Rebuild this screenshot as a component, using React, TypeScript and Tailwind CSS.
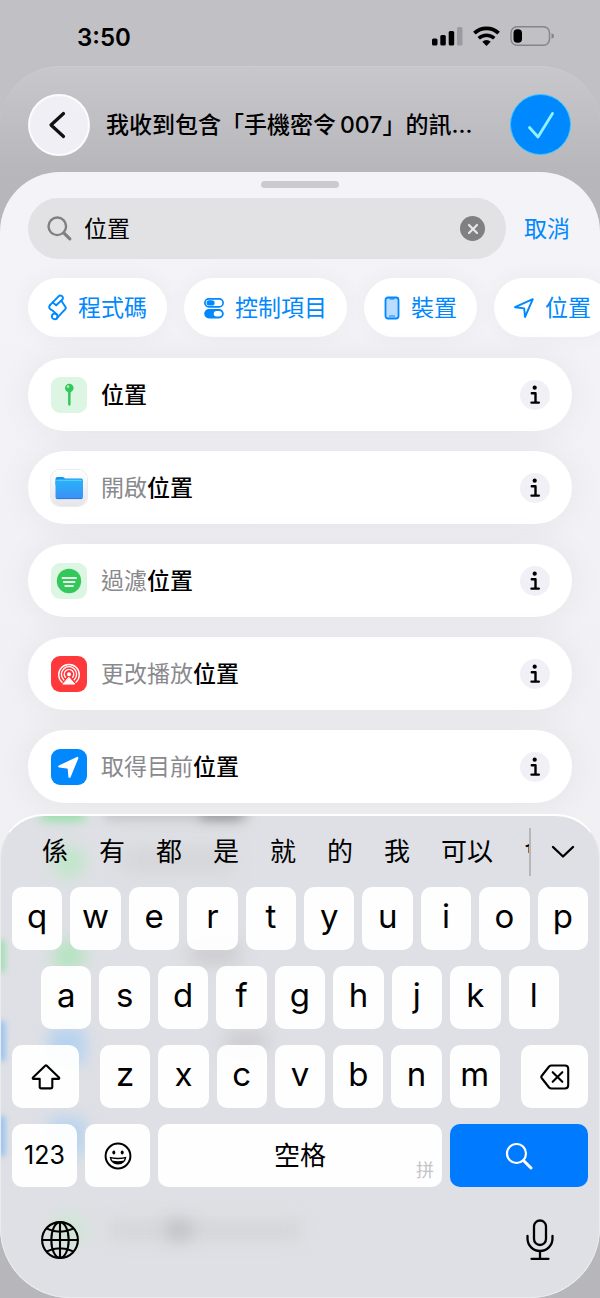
import React, { useState } from 'react';
import { X } from 'lucide-react';

interface Action {
  prefix: string;
  match: string;
  icon: React.ReactNode;
}

const PinIcon = () => (
  <span className="flex size-9 items-center justify-center rounded-[9px] bg-[#dcf6e3]">
    <svg width="36" height="36" viewBox="0 0 36 36" fill="none">
      <path d="M17.4 13h1.800l-.1 14.800q-.8 1.600-1.600 0z" fill="#34c759" stroke="#34c759" strokeWidth=".8" />
      <circle cx="18.300" cy="11" r="4.300" fill="#34c759" />
      <circle cx="17" cy="9.600" r="1.300" fill="#b5ecc3" />
    </svg>
  </span>
);

const FolderIcon = () => (
  <span className="flex size-9 items-center justify-center rounded-[9px] bg-gradient-to-b from-white to-[#e6e6ea] ring-1 ring-[#ececee]">
    <svg width="36" height="36" viewBox="0 0 36 36" fill="none">
      <defs>
        <linearGradient id="folder" x1="0" y1="0" x2="0" y2="1">
          <stop offset="0" stopColor="#25b4fb" />
          <stop offset="1" stopColor="#3f8ef5" />
        </linearGradient>
      </defs>
      <path d="M4.500 9a2 2 0 0 1 2-2h5q1 0 1.600.6l.8.9H30a2 2 0 0 1 2 2V15H4.500z" fill="#1597ee" />
      <rect x="4.500" y="9.600" width="27.500" height="19.500" rx="2.200" fill="url(#folder)" />
      <path d="M5.500 10.300h25.500" stroke="#7fd3ff" strokeWidth=".8" />
      <path d="M6 28.600h24.500" stroke="#1f78e8" strokeWidth=".9" strokeLinecap="round" />
    </svg>
  </span>
);

const FilterIcon = () => (
  <span className="flex size-9 items-center justify-center rounded-[9px] bg-[#dcf6e3]">
    <svg width="36" height="36" viewBox="0 0 36 36" fill="none">
      <circle cx="18" cy="18" r="12.200" fill="#34c759" />
      <path d="M11.500 15h13.500M12.800 19h10.700M14.300 23h7.600" stroke="#e8faec" strokeWidth="1.900" strokeLinecap="round" />
    </svg>
  </span>
);

const AirplayIcon = () => (
  <span className="flex size-9 items-center justify-center rounded-[9px] bg-[#ff383c]">
    <svg width="36" height="36" viewBox="0 0 36 36" fill="none" stroke="#fff" strokeWidth="1.400" strokeLinecap="round">
      <path d="M11 26.300a10.300 10.300 0 1 1 14 0" />
      <path d="M12.700 23.700a7.600 7.600 0 1 1 10.600 0" />
      <path d="M14.400 21.300a4.700 4.700 0 1 1 7.200 0" />
      <circle cx="18" cy="18.300" r="2" fill="#fff" stroke="none" />
      <path d="M18 21.500l5.800 6.600H12.200z" fill="#fff" strokeLinejoin="round" strokeWidth="1" />
    </svg>
  </span>
);

const ArrowIcon = () => (
  <span className="flex size-9 items-center justify-center rounded-[9px] bg-[#0088ff]">
    <svg width="36" height="36" viewBox="0 0 36 36">
      <path d="M8.300 17.500 26.300 9 18.500 27.800l-.8-9.100z" fill="#fff" stroke="#fff" strokeWidth="2.200" strokeLinejoin="round" />
    </svg>
  </span>
);

const ScriptGlyph = () => (
  <svg width="19" height="27" viewBox="0 0 19 27" fill="none" stroke="#0088ff" strokeWidth="1.900" strokeLinejoin="round" strokeLinecap="round">
    <path d="M2 11.200 10.500 2.400q1.600-1.500 3.300-.4 1.900 1.500.6 3.500L8.200 11.200" />
    <path d="M2 11.200q-1.700 2.200.2 3.900l2.600 1.600 3.800 3.500M8.200 11.200 4.600 8.600M13.400 6.800l4.200 6.400q.5 1-.3 1.900l-8.600 9.300" />
    <circle cx="6.700" cy="22.400" r="2.800" />
  </svg>
);

const SwitchGlyph = () => (
  <svg width="20" height="22" viewBox="0 0 20 22" fill="none">
    <rect x=".9" y="1.900" width="18.200" height="8" rx="4" stroke="#0088ff" strokeWidth="1.700" />
    <rect x="2.600" y="3.300" width="8" height="5.200" rx="2.600" fill="#0088ff" />
    <rect x=".2" y="12" width="19.600" height="9.500" rx="4.750" fill="#0088ff" />
    <rect x="9.700" y="14" width="8.200" height="5.500" rx="2.750" fill="#fff" />
  </svg>
);

const PhoneGlyph = () => (
  <svg width="16" height="24" viewBox="0 0 16 24" fill="none">
    <rect x="1.500" y="1.500" width="13" height="21" rx="2.500" fill="#b9dcff" stroke="#0088ff" strokeWidth="1.800" />
    <path d="M5.500 2.300h5v1.200h-5z" fill="#0088ff" />
    <path d="M5.500 20h5" stroke="#0088ff" strokeWidth="1.200" strokeLinecap="round" />
  </svg>
);

const LocationGlyph = () => (
  <svg width="20" height="20" viewBox="0 0 20 20" fill="none" stroke="#0088ff" strokeWidth="1.900" strokeLinejoin="round">
    <path d="M1 9.200 18.800 1.200 11 19l-.8-8.600z" />
  </svg>
);

const actions: Action[] = [
  { prefix: '', match: '位置', icon: <PinIcon /> },
  { prefix: '開啟', match: '位置', icon: <FolderIcon /> },
  { prefix: '過濾', match: '位置', icon: <FilterIcon /> },
  { prefix: '更改播放', match: '位置', icon: <AirplayIcon /> },
  { prefix: '取得目前', match: '位置', icon: <ArrowIcon /> },
];

const categories = [
  { label: '程式碼', icon: <ScriptGlyph /> },
  { label: '控制項目', icon: <SwitchGlyph /> },
  { label: '裝置', icon: <PhoneGlyph /> },
  { label: '位置', icon: <LocationGlyph /> },
];

const candidates = ['係', '有', '都', '是', '就', '的', '我', '可以', '會'];

const StatusBar = () => (
  <div className="flex h-[66px] items-center justify-between pt-[5px] pr-[45px] pl-[77px]">
    <time className="pt-1 text-2xl font-semibold">3:50</time>
    <div className="flex items-center gap-[10px]">
      <svg width="32" height="20" viewBox="0 0 32 20">
        <rect x="1" y="12.500" width="5.500" height="7" rx="1.500" />
        <rect x="9.300" y="9" width="5.500" height="10.500" rx="1.500" />
        <rect x="17.700" y="5" width="5.500" height="14.500" rx="1.500" />
        <rect x="26" y="1" width="5.500" height="18.500" rx="1.500" fill="#9b9a9f" />
      </svg>
      <svg width="27" height="20" viewBox="0 0 27 20" fill="none">
        <path d="M1.400 7.200a17.500 17.500 0 0 1 24.200 0" stroke="#000" strokeWidth="3.800" />
        <path d="M5.700 12.200a11.500 11.500 0 0 1 15.600 0" stroke="#000" strokeWidth="3.500" />
        <path d="M9.300 15.700a6.200 6.200 0 0 1 8.400 0L13.500 19.900z" fill="#000" />
      </svg>
      <svg width="45" height="20" viewBox="0 0 45 20">
        <rect x="1" y=".8" width="38.500" height="18.400" rx="6" fill="none" stroke="#85848a" strokeWidth="1.400" />
        <rect x="3.500" y="3.300" width="8.500" height="13.400" rx="3.800" />
        <path d="M41.500 7.200q2.600.8 2.600 2.800t-2.600 2.800z" fill="#85848a" />
      </svg>
    </div>
  </div>
);

const Header = () => (
  <header className="flex h-[105px] items-start gap-4 pt-[27px] pr-[29px] pl-[28px]">
    <button aria-label="返回" className="flex size-[62px] shrink-0 items-center justify-center rounded-full border-2 border-white/80 bg-[#f0eff5]">
      <svg width="24" height="30" viewBox="0 0 24 30" fill="none">
        <path d="M16.500 3.500 4 15l12.500 11.500" stroke="#111" strokeWidth="3.200" strokeLinecap="round" strokeLinejoin="round" />
      </svg>
    </button>
    <h1 className="h-[62px] min-w-0 flex-1 text-[23px] leading-[62px] font-medium whitespace-nowrap">
      我收到包含「手機密令{'\u2009'}007」的訊…
    </h1>
    <button aria-label="完成" className="flex size-[61px] shrink-0 items-center justify-center rounded-full border border-[#3cc8ff] bg-[#0088ff]">
      <svg width="30" height="30" viewBox="0 0 30 30" fill="none">
        <path d="M3.500 17.500 12 27 26.500 3.500" stroke="#8ff4ff" strokeWidth="2.800" strokeLinecap="round" strokeLinejoin="round" />
      </svg>
    </button>
  </header>
);

const ActionRow: React.FC<{ action: Action }> = ({ action }) => (
  <li className="flex h-[73px] items-center rounded-full bg-white pr-[22px] pl-[23px] shadow-[0_0_36px_rgba(0,0,0,0.06)]">
    {action.icon}
    <p className="flex-1 pl-[14px] text-[23px] leading-8 font-medium">
      <span className="font-normal text-[#8a8a8e]">{action.prefix}</span>
      {action.match}
    </p>
    <button aria-label="簡介" className="flex size-[30px] items-center justify-center rounded-full bg-[#f1f0f6]">
      <svg width="12" height="20" viewBox="0 0 12 20" fill="none" stroke="#000" strokeWidth="2.400" strokeLinecap="round" strokeLinejoin="round">
        <circle cx="5.700" cy="2.700" r="2.100" fill="#000" stroke="none" />
        <path d="M2.800 8.200h3.700v9.300M2.500 17.600h7.300" />
      </svg>
    </button>
  </li>
);

const Key: React.FC<{ label: string }> = ({ label }) => (
  <button className="h-[63px] min-w-0 flex-1 rounded-[10px] bg-white/95 pb-1 text-[33px] leading-none">{label}</button>
);

// soft colours of the rows that scroll behind the keyboard glass
const Glow = () => (
  <div aria-hidden="true" className="pointer-events-none absolute inset-0">
    <div className="absolute -top-3 left-10 h-4 w-11 bg-[#8be0a0] blur-[6px]" />
    <div className="absolute -top-3 left-26 h-4 w-36 bg-[#c2c2c6] blur-[6px]" />
    <div className="absolute -top-3 left-[200px] h-4 w-10 bg-[#9b9b9f] blur-[6px]" />
    <div className="absolute top-[30px] left-[52px] size-8 rounded-full bg-[#bfe6c8] blur-[8px]" />
    <div className="absolute top-[32px] left-30 h-6 w-28 bg-[#d4d5d8] blur-[10px]" />
    <div className="absolute top-[124px] left-[52px] size-8 rounded-full bg-[#b4e3bf] blur-[8px]" />
    <div className="absolute top-[128px] left-[190px] h-5 w-12 bg-[#cacace] blur-[9px]" />
    <div className="absolute top-[212px] left-12 h-9 w-9 bg-[#b4d2f0] blur-[8px]" />
    <div className="absolute top-[216px] left-[225px] h-5 w-10 bg-[#cacace] blur-[9px]" />
    <div className="absolute top-[302px] left-12 h-9 w-9 bg-[#b4d2f0] blur-[8px]" />
    <div className="absolute top-[398px] left-[52px] size-8 rounded-full bg-[#cde6d3] blur-[8px]" />
    <div className="absolute top-[404px] left-[108px] h-5 w-48 bg-[#d5d6d9] blur-[8px]" />
    <div className="absolute top-[404px] left-[166px] h-5 w-6 bg-[#c2c2c6] blur-[8px]" />
    <div className="absolute top-[124px] -left-1 h-8 w-2 bg-[#9ddfb0] blur-[3px]" />
    <div className="absolute top-[205px] -left-1 h-10 w-2 bg-[#8fc0f2] blur-[3px]" />
    <div className="absolute top-[300px] -left-1 h-10 w-2 bg-[#8fc0f2] blur-[3px]" />
  </div>
);

const Keyboard = () => (
  <section className="relative h-[484px] overflow-hidden rounded-t-[44px] rounded-b-[70px] border border-t-2 border-[#eaebee] border-t-white bg-[#dfe0e5]">
    <Glow />
    <div className="relative">
      <div className="flex h-[71px] items-center">
        <ul className="flex flex-1 gap-[31px] overflow-hidden pl-[41px] text-[26px] leading-10 whitespace-nowrap">
          {candidates.map((c) => (
            <li key={c}>
              <button>{c}</button>
            </li>
          ))}
        </ul>
        <button aria-label="展開" className="flex h-12 w-[70px] items-center justify-center border-l-2 border-[#b6b7bb] pr-1">
          <svg width="24" height="14" viewBox="0 0 24 14" fill="none">
            <path d="M2 2l10 9.500L22 2" stroke="#000" strokeWidth="2.400" strokeLinecap="round" strokeLinejoin="round" />
          </svg>
        </button>
      </div>

      <div className="flex flex-col gap-4 px-[11px]">
        <div className="flex gap-2">
          {'qwertyuiop'.split('').map((k) => <Key key={k} label={k} />)}
        </div>
        <div className="flex gap-2 px-[29px]">
          {'asdfghjkl'.split('').map((k) => <Key key={k} label={k} />)}
        </div>
        <div className="flex gap-[21px]">
          <button aria-label="shift" className="flex h-[63px] w-[67px] items-center justify-center rounded-[10px] bg-white/95">
            <svg width="30" height="26" viewBox="0 0 30 26" fill="none" stroke="#000" strokeWidth="2.100" strokeLinejoin="round">
              <path d="M14.200 1.800q.8-.8 1.600 0L28 13.600q.8 1.200-.6 1.300H21.300v7.800q0 1.700-1.700 1.700h-9.200q-1.700 0-1.700-1.700v-7.800H2.600q-1.400-.1-.6-1.300z" />
            </svg>
          </button>
          <div className="flex flex-1 gap-2">
            {'zxcvbnm'.split('').map((k) => <Key key={k} label={k} />)}
          </div>
          <button aria-label="刪除" className="flex h-[63px] w-[67px] items-center justify-center rounded-[10px] bg-white/95">
            <svg width="30" height="26" viewBox="0 0 30 26" fill="none" stroke="#000" strokeWidth="2.100" strokeLinejoin="round" strokeLinecap="round">
              <path d="M11.500 1.500H25q3.200 0 3.200 3.200v16.600q0 3.200-3.200 3.200H11.500q-1.400 0-2.400-1L2 14.500q-1.400-1.500 0-3L9.100 2.500q1-1 2.400-1z" />
              <path d="M12.700 8.200l9.600 9.600M22.300 8.200l-9.600 9.600" />
            </svg>
          </button>
        </div>
        <div className="flex gap-2">
          <button className="h-[63px] w-[65px] rounded-[10px] bg-white/95 text-[25px]">123</button>
          <button aria-label="表情符號" className="flex h-[63px] w-[65px] items-center justify-center rounded-[10px] bg-white/95">
            <svg width="28" height="28" viewBox="0 0 28 28" fill="none">
              <circle cx="14" cy="14" r="12.400" stroke="#000" strokeWidth="2" />
              <ellipse cx="9.800" cy="10.400" rx="1.500" ry="2" fill="#000" />
              <ellipse cx="18.200" cy="10.400" rx="1.500" ry="2" fill="#000" />
              <path d="M5.600 14.800q8.400 2 16.800 0-.8 7.600-8.400 7.600t-8.400-7.600z" fill="#000" />
              <path d="M7.400 16.600q6.600 1.300 13.200 0l-.8 1.900q-5.800 1.300-11.600 0z" fill="#fff" />
            </svg>
          </button>
          <button className="relative h-[63px] flex-1 rounded-[10px] bg-white/95 text-[26px]">
            空格
            <span className="absolute right-2 bottom-1 text-[18px] leading-6 text-[#c4c4c8]">拼</span>
          </button>
          <button aria-label="搜尋" className="flex h-[63px] w-[138px] items-center justify-center rounded-[10px] bg-[#007aff]">
            <svg width="28" height="28" viewBox="0 0 28 28" fill="none" stroke="#fff" strokeWidth="2.200" strokeLinecap="round">
              <circle cx="11.500" cy="11.500" r="9.500" />
              <path d="M18.500 18.500l7.500 7.500" strokeWidth="3" />
            </svg>
          </button>
        </div>
      </div>

      <div className="flex items-center justify-between px-[39px] pt-8">
        <button aria-label="切換鍵盤">
          <svg width="40" height="40" viewBox="0 0 40 40" fill="none" stroke="#000" strokeWidth="2.100">
            <circle cx="20" cy="20" r="17.900" />
            <ellipse cx="20" cy="20" rx="8.700" ry="17.900" />
            <path d="M20 2.300v35.400M2.300 20h35.400M6.800 8.600q13.200 6.200 26.400 0M6.800 31.400q13.200-6.200 26.400 0" />
          </svg>
        </button>
        <button aria-label="聽寫">
          <svg width="40" height="42" viewBox="0 0 40 42" fill="none" stroke="#000" strokeWidth="2.300" strokeLinecap="round">
            <rect x="14" y="1.500" width="12" height="24.500" rx="6" />
            <path d="M7.500 17v2.500a12.500 12.500 0 0 0 25 0V17M20 32v7.500M11.500 39.800h17" />
          </svg>
        </button>
      </div>
    </div>
  </section>
);

const App: React.FC = () => {
  const [query, setQuery] = useState('位置');

  return (
    <div className="bg-[#c1c0c5] font-[Inter,'Noto_Sans_CJK_TC',sans-serif] text-black">
      <StatusBar />
      <main className="rounded-t-[60px] border-t border-[#cccbd0] bg-linear-to-b from-[#c8c7cc] to-[#b7b6bb] to-[106px]">
        <Header />
        <div className="overflow-hidden rounded-t-[60px] rounded-b-[70px] bg-linear-to-b from-[#f4f4f8] to-[#eeeef1]">
          <div className="mx-auto mt-[9px] h-[7px] w-[78px] rounded-full bg-[#cbcbce]" />

          <div className="mt-[10px] flex items-center pr-[30px] pl-[28px]">
            <label className="flex h-[61px] min-w-0 flex-1 items-center gap-3 rounded-full bg-[#e2e2e4] pr-[21px] pl-[19px]">
              <svg width="25" height="25" viewBox="0 0 25 25" fill="none" stroke="#808083" strokeWidth="2.400" strokeLinecap="round">
                <circle cx="10.300" cy="10.300" r="8.800" />
                <path d="M16.800 16.800l6 6" strokeWidth="3.200" />
              </svg>
              <input
                type="text"
                aria-label="搜尋動作"
                value={query}
                onChange={(e) => setQuery(e.target.value)}
                className="min-w-0 flex-1 bg-transparent text-[23px] leading-8 outline-none"
              />
              <button
                aria-label="清除"
                onClick={() => setQuery('')}
                className="flex size-[25px] items-center justify-center rounded-full bg-[#808083]"
              >
                <X size={16} strokeWidth={3.2} color="#e8e8ea" />
              </button>
            </label>
            <button className="pl-[18px] text-[23px] leading-8 text-[#0088ff]">取消</button>
          </div>

          <nav className="mt-[19px] flex gap-[17px] pl-[28px]">
            {categories.map((c) => (
              <button
                key={c.label}
                className="flex h-[59px] shrink-0 items-center gap-[11px] rounded-full bg-white px-5 text-[23px] leading-8 text-[#0088ff] shadow-[0_0_24px_rgba(0,0,0,0.04)]"
              >
                {c.icon}
                {c.label}
              </button>
            ))}
          </nav>

          <ul className="mt-[21px] mb-[11px] flex flex-col gap-5 px-[28px]">
            {actions.map((a) => (
              <ActionRow key={a.prefix + a.match} action={a} />
            ))}
          </ul>

          <Keyboard />
        </div>
      </main>
    </div>
  );
};

export default App;
